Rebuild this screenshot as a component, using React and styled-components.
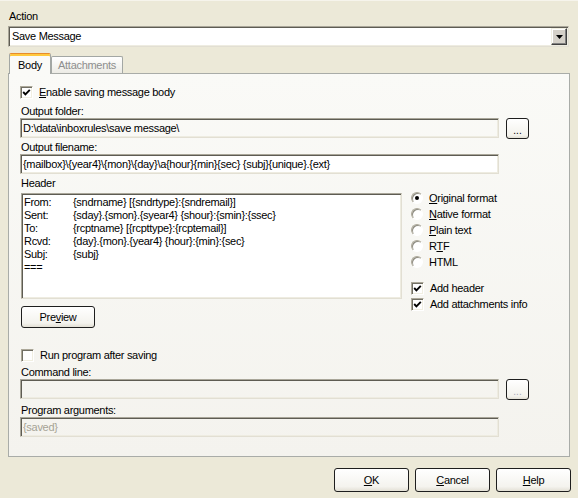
import React from 'react';
import styled, { createGlobalStyle } from 'styled-components';

const Global = createGlobalStyle`
  html, body { margin: 0; padding: 0; background: #ECE9D8; }
  body { font-family: "Liberation Sans", Arial, sans-serif; font-size: 11px; letter-spacing: -0.3px; color: #000; }
  * { box-sizing: border-box; }
`;

const sunken = `
  border: 1px solid;
  border-color: #A9A699 #E2DFD3 #E2DFD3 #A9A699;
  box-shadow: inset 1px 1px 0 #5E5C53, inset -1px -1px 0 #EEECE1;
`;

const Dialog = styled.div`
  width: 578px;
  height: 498px;
  padding: 9px 7px 0 8px;
  display: flex;
  flex-direction: column;
  background: #ECE9D8;
  border-top: 1px solid #F6F4EC;
`;

const FieldLabel = styled.div`
  line-height: 13px;
  height: 13px;
  margin-top: ${p => p.$top || 0}px;
  margin-left: ${p => p.$indent ?? 1}px;
  white-space: nowrap;
`;

const Combo = styled.div`
  height: 21px;
  margin-top: 3px;
  margin-right: 2px;
  background: #fff;
  ${sunken}
  display: flex;
  align-items: center;
  justify-content: space-between;
  padding: 0 1px 0 3px;
`;

const ComboText = styled.span`
  line-height: 13px;
`;

const ComboButton = styled.span`
  width: 16px;
  height: 17px;
  background: #D4D0C8;
  border: 1px solid;
  border-color: #F1EFE2 #404040 #404040 #F1EFE2;
  box-shadow: inset -1px -1px 0 #808080, inset 1px 1px 0 #fff;
  display: flex;
  align-items: center;
  justify-content: center;
`;

const TabStrip = styled.div`
  display: flex;
  align-items: flex-end;
  height: 21px;
  margin-top: 6px;
  padding-left: 1px;
  position: relative;
  z-index: 1;
`;

const Tab = styled.div`
  width: ${p => p.$w}px;
  height: ${p => (p.$active ? 21 : 17)}px;
  margin-bottom: ${p => (p.$active ? 0 : 1)}px;
  border: 1px solid #A3A7A4;
  border-bottom: none;
  border-top-color: ${p => (p.$active ? '#E68B2C' : '#A3A7A4')};
  border-radius: 2px 2px 0 0;
  box-shadow: ${p => (p.$active ? 'inset 0 2px 0 #FFC83C' : 'none')};
  background: ${p => (p.$active ? '#FAFAF7' : 'linear-gradient(#FFFFFF, #ECEBE5)')};
  color: ${p => (p.$active ? '#000' : '#8E8E8E')};
  display: flex;
  align-items: center;
  justify-content: center;
  padding-top: ${p => (p.$active ? 2 : 0)}px;
  line-height: 13px;
`;

const Panel = styled.div`
  margin-top: -1px;
  margin-right: 1px;
  height: 384px;
  border: 1px solid #A9ACA8;
  background: linear-gradient(#FAFAF7, #F4F3EE);
  padding: 12px 0 0 11px;
  display: flex;
  flex-direction: column;
  align-items: flex-start;
`;

const CheckRow = styled.label`
  display: flex;
  align-items: center;
  gap: 6px;
  height: 13px;
  margin-top: ${p => p.$top || 0}px;
  margin-left: ${p => p.$indent || 0}px;
  line-height: 13px;
  white-space: nowrap;
`;

const CheckBox = styled.span`
  width: 13px;
  height: 13px;
  flex: none;
  background: #fff;
  display: inline-flex;
  align-items: center;
  justify-content: center;
  border: 1px solid;
  border-color: #ACA899 #FFFFFF #FFFFFF #ACA899;
  box-shadow: inset 1px 1px 0 #716F64, inset -1px -1px 0 #F1EFE2;
`;

const RadioDot = styled.span`
  width: 12px;
  height: 12px;
  flex: none;
  border-radius: 50%;
  background: #fff;
  position: relative;
  border: 1px solid;
  border-color: #ACA899 #FFFFFF #FFFFFF #ACA899;
  box-shadow: inset 1px 1px 0 #8D8B80;
  &::after {
    content: '';
    display: ${p => (p.$on ? 'block' : 'none')};
    position: absolute;
    left: 3px;
    top: 3px;
    width: 4px;
    height: 4px;
    border-radius: 50%;
    background: #000;
  }
`;

const FieldRow = styled.div`
  display: flex;
  align-items: flex-start;
  gap: 7px;
`;

const TextField = styled.input`
  width: 479px;
  height: 20px;
  ${sunken}
  background: ${p => (p.$white ? '#fff' : 'transparent')};
  color: ${p => (p.$dim ? '#A6A395' : '#000')};
  font: inherit;
  letter-spacing: inherit;
  padding: 0 2px;
  margin: 0;
  outline: none;
`;

const BrowseButton = styled.button`
  width: 23px;
  height: 21px;
  margin: 0;
  padding: 3px 0 0;
  font: inherit;
  font-size: 10px;
  color: ${p => (p.$disabled ? '#A8A8B8' : '#000')};
  border: 1px solid #1E1E1E;
  border-radius: 3px;
  background: linear-gradient(#FFFFFF, #F3F2EC 85%, #E2DFD4);
`;

const HeaderRow = styled.div`
  display: flex;
  align-items: flex-start;
`;

const HeaderColumn = styled.div`
  display: flex;
  flex-direction: column;
  align-items: flex-start;
`;

const HeaderBox = styled.div`
  width: 381px;
  height: 106px;
  margin: 3px 0 0 1px;
  background: #fff;
  ${sunken}
  padding: 2px 0 0 2px;
  display: grid;
  grid-template-columns: 49px 1fr;
  grid-auto-rows: 13px;
  align-content: start;
  line-height: 13px;
  white-space: nowrap;
`;

const OptionColumn = styled.div`
  margin-left: 9px;
  display: flex;
  flex-direction: column;
`;

const OptionRow = styled.label`
  display: flex;
  align-items: center;
  gap: 6px;
  height: 16px;
  margin-top: ${p => p.$top || 0}px;
  line-height: 13px;
  white-space: nowrap;
`;

const PushButton = styled.button`
  width: ${p => p.$w}px;
  height: ${p => p.$h}px;
  margin: ${p => p.$top || 0}px 0 0 ${p => p.$indent || 0}px;
  padding: 0;
  font: inherit;
  letter-spacing: inherit;
  color: #000;
  border: 1px solid #1E1E1E;
  border-radius: 3px;
  background: linear-gradient(#FFFFFF, #F4F3EE 80%, #E3E0D5);
`;

const ButtonBar = styled.div`
  display: flex;
  justify-content: flex-end;
  gap: 6px;
  margin-top: 11px;
`;

const Check = () => (
  <svg width="9" height="9" viewBox="0 0 9 9">
    <polyline points="1.2,4 3.4,6.3 7.8,1.8" fill="none" stroke="#000" strokeWidth="1.9" />
  </svg>
);

const Arrow = () => (
  <svg width="7" height="4" viewBox="0 0 7 4">
    <polygon points="0,0 7,0 3.5,4" fill="#000" />
  </svg>
);

const headerLines = [
  ['From:', '{sndrname} [{sndrtype}:{sndremail}]'],
  ['Sent:', '{sday}.{smon}.{syear4} {shour}:{smin}:{ssec}'],
  ['To:', '{rcptname} [{rcpttype}:{rcptemail}]'],
  ['Rcvd:', '{day}.{mon}.{year4} {hour}:{min}:{sec}'],
  ['Subj:', '{subj}'],
  ['===', ''],
];

export default function App() {
  return (
    <>
      <Global />
      <Dialog>
        <FieldLabel $indent={1}>Action</FieldLabel>
        <Combo>
          <ComboText>Save Message</ComboText>
          <ComboButton><Arrow /></ComboButton>
        </Combo>

        <TabStrip>
          <Tab $active $w={42}>Body</Tab>
          <Tab $w={72}>Attachments</Tab>
        </TabStrip>

        <Panel>
          <CheckRow>
            <CheckBox><Check /></CheckBox>
            <span><u>E</u>nable saving message body</span>
          </CheckRow>

          <FieldLabel $top={6}>Output folder:</FieldLabel>
          <FieldRow>
            <TextField readOnly defaultValue={'D:\\data\\inboxrules\\save message\\'} />
            <BrowseButton>...</BrowseButton>
          </FieldRow>

          <FieldLabel $top={2}>Output filename:</FieldLabel>
          <TextField $white readOnly defaultValue={'{mailbox}\\{year4}\\{mon}\\{day}\\a{hour}{min}{sec} {subj}{unique}.{ext}'} />

          <FieldLabel $top={3}>Header</FieldLabel>
          <HeaderRow>
            <HeaderColumn>
              <HeaderBox>
                {headerLines.map(([k, v]) => (
                  <React.Fragment key={k}>
                    <span>{k}</span>
                    <span>{v}</span>
                  </React.Fragment>
                ))}
              </HeaderBox>
              <PushButton $w={74} $h={22} $top={7} $indent={1}>Pre<u>v</u>iew</PushButton>
            </HeaderColumn>
            <OptionColumn>
              <OptionRow><RadioDot $on /><span><u>O</u>riginal format</span></OptionRow>
              <OptionRow><RadioDot /><span><u>N</u>ative format</span></OptionRow>
              <OptionRow><RadioDot /><span><u>P</u>lain text</span></OptionRow>
              <OptionRow><RadioDot /><span>R<u>T</u>F</span></OptionRow>
              <OptionRow><RadioDot /><span>HTML</span></OptionRow>
              <OptionRow $top={10}><CheckBox><Check /></CheckBox><span>Add header</span></OptionRow>
              <OptionRow><CheckBox><Check /></CheckBox><span>Add attachments info</span></OptionRow>
            </OptionColumn>
          </HeaderRow>

          <CheckRow $top={21} $indent={1}>
            <CheckBox />
            <span>Run program after saving</span>
          </CheckRow>

          <FieldLabel $top={4}>Command line:</FieldLabel>
          <FieldRow>
            <TextField readOnly defaultValue="" />
            <BrowseButton $disabled>...</BrowseButton>
          </FieldRow>

          <FieldLabel $top={4}>Program arguments:</FieldLabel>
          <TextField $dim readOnly defaultValue="{saved}" />
        </Panel>

        <ButtonBar>
          <PushButton $w={75} $h={24}><u>O</u>K</PushButton>
          <PushButton $w={75} $h={24}><u>C</u>ancel</PushButton>
          <PushButton $w={75} $h={24}><u>H</u>elp</PushButton>
        </ButtonBar>
      </Dialog>
    </>
  );
}
